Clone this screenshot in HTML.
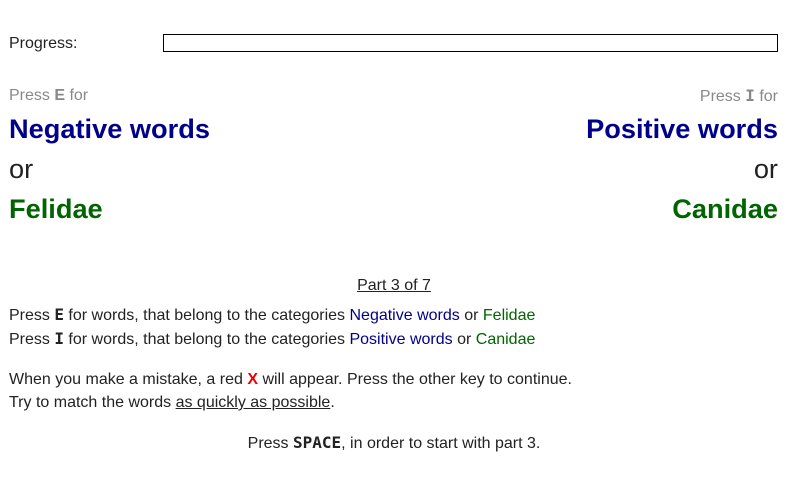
<!DOCTYPE html>
<html><head><meta charset="utf-8"><style>
body{margin:0;width:790px;height:480px;background:#fff;font-family:"Liberation Sans",sans-serif;color:#222;position:relative;overflow:hidden}
.a{position:absolute;white-space:nowrap;line-height:1}
.k{font-family:"DejaVu Sans Mono","Liberation Mono",monospace;font-weight:bold}
.big{font-size:27.2px}
.b{font-weight:bold}
.blue{color:#00008b}.green{color:#006400}
.s{font-size:16px}
</style></head><body>
<div class="a s" style="left:9px;top:36px">Progress:</div>
<div class="a" style="left:163px;top:34px;width:613px;height:16px;border:1px solid #000"></div>

<div class="a s" style="left:9px;top:88px;color:#888">Press <span class="b">E</span> for</div>
<div class="a big b blue" style="left:9px;top:115px">Negative words</div>
<div class="a big" style="left:9px;top:155px">or</div>
<div class="a big b green" style="left:9px;top:195px">Felidae</div>

<div class="a s" style="right:12px;top:88px;color:#888">Press <span class="k">I</span> for</div>
<div class="a big b blue" style="right:12px;top:115px">Positive words</div>
<div class="a big" style="right:12px;top:155px">or</div>
<div class="a big b green" style="right:12px;top:195px">Canidae</div>

<div class="a s" style="left:0;width:788px;text-align:center;top:278px"><u>Part 3 of 7</u></div>
<div class="a s" style="left:9px;top:307px">Press <span class="k">E</span> for words, that belong to the categories <span class="blue">Negative words</span> or <span class="green">Felidae</span></div>
<div class="a s" style="left:9px;top:331px">Press <span class="k">I</span> for words, that belong to the categories <span class="blue">Positive words</span> or <span class="green">Canidae</span></div>
<div class="a s" style="left:9px;top:372px">When you make a mistake, a red <span class="b" style="color:#e00">X</span> will appear. Press the other key to continue.</div>
<div class="a s" style="left:9px;top:395px">Try to match the words <u>as quickly as possible</u>.</div>
<div class="a s" style="left:0;width:788px;text-align:center;top:435px">Press <span class="k">SPACE</span>, in order to start with part 3.</div>
</body></html>
